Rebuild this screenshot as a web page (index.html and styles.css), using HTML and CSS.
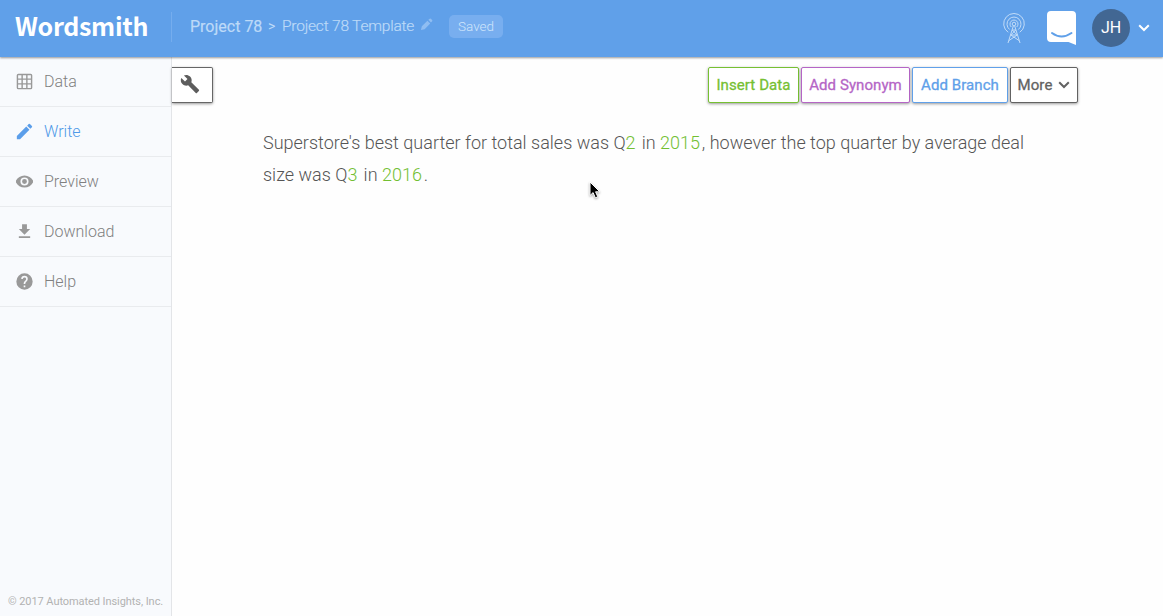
FILE: index.html
```html
<!DOCTYPE html>
<html lang="en">
<head>
<meta charset="utf-8">
<title>Wordsmith</title>
<link rel="stylesheet" href="styles.css">
</head>
<body>
<header class="topbar">
  <div class="logo">Wordsmith</div>
  <nav class="crumbs">
    <span class="crumb-project">Project 78</span>
    <span class="crumb-sep">&gt;</span>
    <span class="crumb-template">Project 78 Template</span>
    <svg class="crumb-edit" viewBox="0 0 14 14"><path d="M1 13l1-4 6-6 3 3-6 6zM9 2l1.400-1.300q.6-.5 1.200 0l1.500 1.500q.5.600 0 1.200L11.800 4.800z"/></svg>
    <span class="saved">Saved</span>
  </nav>
  <div class="actions">
    <svg class="antenna" viewBox="0 0 24 32">
      <circle cx="12" cy="12" r="1.800"/>
      <path d="M9.300 15A4 4 0 1 1 14.700 15M7.600 17.500A7 7 0 1 1 16.400 17.500M6.200 20.300A10.300 10.300 0 1 1 17.800 20.300M11.300 14L6 31M12.700 14L18 31M10.200 18h3.600L8.800 23h6.400L7 28.500M8.800 23l8.200 5.500M10.200 18l5 5"/>
    </svg>
    <svg class="chat" viewBox="0 0 30 35"><path class="chat-body" d="M4 0h21q4 0 4 4v30l-7.500-3H4q-4 0-4-4V4q0-4 4-4z"/><path class="chat-smile" d="M5 22q9.500 7 19.500 0"/></svg>
    <div class="avatar">JH</div>
    <svg class="chevron user-chevron" viewBox="0 0 12 8"><path d="M1.200 1.300L6 6l4.800-4.700"/></svg>
  </div>
</header>
<div class="workspace">
  <aside class="sidebar">
    <a class="item"><svg class="icon" viewBox="0 0 18 18"><path class="line" d="M2.500 1.500h13q1 0 1 1v13q0 1-1 1h-13q-1 0-1-1v-13q0-1 1-1zM1.500 6.500h15M1.500 11.500h15M6.500 1.500v15M11.500 1.500v15"/></svg>Data</a>
    <a class="item active"><svg class="icon" viewBox="2 2 20 20"><path d="M3 17.250V21h3.750L17.810 9.940l-3.750-3.750L3 17.250zM20.710 7.040a1 1 0 0 0 0-1.410l-2.340-2.340a1 1 0 0 0-1.410 0l-1.830 1.830 3.750 3.750 1.830-1.830z"/></svg>Write</a>
    <a class="item"><svg class="icon" viewBox="1.500 1.500 21 21"><path d="M12 4.500C7 4.500 2.730 7.610 1 12c1.730 4.390 6 7.500 11 7.500s9.270-3.110 11-7.500c-1.730-4.390-6-7.500-11-7.500zM12 17a5 5 0 1 1 0-10 5 5 0 0 1 0 10zm0-8a3 3 0 1 0 0 6 3 3 0 0 0 0-6z"/></svg>Preview</a>
    <a class="item"><svg class="icon" viewBox="1.500 1.500 21 21"><path d="M19 9h-4V3H9v6H5l7 7 7-7zM5 18v2h14v-2z"/></svg>Download</a>
    <a class="item"><svg class="icon" viewBox="1.600 1.600 20.800 20.800"><path d="M12 2a10 10 0 1 0 0 20 10 10 0 0 0 0-20zm1 17h-2v-2h2v2zm2.070-7.750l-.9.920C13.450 12.900 13 13.500 13 15h-2v-.5c0-1.100.45-2.100 1.170-2.830l1.240-1.260A2 2 0 1 0 10 9H8a4 4 0 1 1 8 0c0 .88-.36 1.680-.93 2.250z"/></svg>Help</a>
    <footer class="copyright">© 2017 Automated Insights, Inc.</footer>
  </aside>
  <main class="main">
    <div class="toolbar">
      <button class="tool"><svg class="wrench" viewBox="0 0 24 24"><path d="M22.700 19l-9.100-9.100c.9-2.300.4-5-1.500-6.900-2-2-5-2.400-7.400-1.300L9 6 6 9 1.600 4.700C.4 7.100.9 10.100 2.900 12.100c1.900 1.900 4.600 2.400 6.900 1.500l9.100 9.100c.4.400 1 .4 1.400 0l2.300-2.300c.5-.4.500-1.100.1-1.400z"/></svg></button>
      <div class="buttons">
        <button class="btn insert">Insert Data</button>
        <button class="btn synonym">Add Synonym</button>
        <button class="btn branch">Add Branch</button>
        <button class="btn more">More<svg class="chevron" viewBox="0 0 12 8"><path d="M1.200 1.300L6 6l4.800-4.700"/></svg></button>
      </div>
    </div>
    <div class="document">
      <div class="text-line first">Superstore's best quarter for total sales was Q<span class="token">2</span> in <span class="token">2015</span>, however the top quarter by average deal</div>
      <div class="text-line second">size was Q<span class="token">3</span> in <span class="token">2016</span>.</div>
    </div>
  </main>
</div>
<svg class="cursor" viewBox="0 0 12 19"><path d="M1 1v13.500l3.100-2.900 2.200 5.200 2.500-1-2.200-5h4.200z"/></svg>
</body>
</html>
```
FILE: styles.css
```css
* { box-sizing: border-box; }
body {
  margin: 0;
  height: 616px;
  overflow: hidden;
  display: flex;
  flex-direction: column;
  font-family: Roboto, "Liberation Sans", sans-serif;
  background: #fefefe;
  color: #666;
}
svg { display: block; flex: none; }
.topbar {
  position: relative;
  z-index: 2;
  flex: none;
  height: 57px;
  display: flex;
  align-items: flex-start;
  background: #60a0e9;
  box-shadow: 0 1px 2px rgba(0, 0, 0, .4);
}
.logo {
  width: 172px;
  height: 30px;
  margin-top: 12px;
  padding-left: 15px;
  border-right: 1px solid #75adee;
  font: 700 25px/26px "Noto Sans CJK SC", sans-serif;
  letter-spacing: -.3px;
  color: #fff;
}
.crumbs {
  display: flex;
  align-items: center;
  height: 24px;
  margin: 14px 0 0 18px;
  font-size: 16px;
  color: #bddaf8;
  white-space: nowrap;
}
.crumb-project { width: 78px; font-weight: 400; -webkit-text-stroke: .2px currentColor; }
.crumb-sep { width: 14px; font-size: 14px; font-weight: 400; }
.crumb-template { width: 132px; font-size: 15.500px; font-weight: 300; letter-spacing: -.2px; -webkit-text-stroke: .2px currentColor; }
.crumb-project, .crumb-template { flex: none; }
.crumb-edit { width: 13px; height: 13px; margin: -4px 16px 0 6px; fill: #8fbdf2; }
.saved {
  width: 54px;
  height: 23px;
  margin-top: 1px;
  border-radius: 5px;
  background: #78aeef;
  font-size: 13.500px;
  font-weight: 300;
  line-height: 23px;
  text-align: center;
  color: #d0e5fb;
}
.actions { display: flex; align-items: center; margin: 9px 13px 0 auto; }
.antenna { width: 24px; height: 32px; margin-right: 21px; fill: none; stroke: #c2dcf8; stroke-width: 1; }
.chat { width: 30px; height: 35px; margin-right: 15px; }
.chat-body { fill: #fff; }
.chat-smile { fill: none; stroke: #60a0e9; stroke-width: 2; stroke-linecap: round; }
.avatar {
  width: 38px;
  height: 38px;
  margin-right: 8px;
  border-radius: 50%;
  background: #426793;
  color: #fff;
  font-size: 16px;
  line-height: 38px;
  text-align: center;
}
.chevron { width: 12px; height: 8px; fill: none; stroke: currentColor; stroke-width: 2; }
.user-chevron { color: #fff; }
.workspace { flex: 1; display: flex; min-height: 0; }
.sidebar {
  flex: none;
  width: 172px;
  display: flex;
  flex-direction: column;
  border-right: 1px solid #e3e5e8;
  background: #f8fafd;
}
.item {
  display: flex;
  align-items: center;
  gap: 11px;
  height: 50px;
  padding-left: 16px;
  border-bottom: 1px solid #e9ebee;
  font-size: 16px;
  font-weight: 300;
  color: #808080;
}
.icon { width: 17px; height: 17px; fill: #999; }
.line { fill: none; stroke: #999; stroke-width: 1.500; }
.active { color: #4f99e8; }
.active .icon { fill: #5b9eea; }
.copyright { margin: auto 0 7px 8px; font-size: 11px; line-height: 14px; letter-spacing: -.07px; color: #b2b2b2; white-space: nowrap; }
.main { flex: 1; min-width: 0; }
.toolbar { display: flex; justify-content: space-between; height: 47px; padding: 10px 85px 0 0; }
.tool, .btn {
  height: 36px;
  padding: 0;
  background: #fff;
  border: 1px solid currentColor;
  border-radius: 2px;
  box-shadow: 0 1px 3px rgba(0, 0, 0, .4);
  font: 400 15px/34px Roboto, sans-serif;
  white-space: nowrap;
}
.tool { width: 41px; padding: 0 0 2px 8px; border-left: 0; border-radius: 0 2px 2px 0; color: #666; }
.wrench { width: 20px; height: 20px; fill: #5d5d5d; }
.buttons { display: flex; gap: 2px; }
.btn { letter-spacing: .08px; -webkit-text-stroke: .3px currentColor; }
.insert { width: 91px; color: #76c032; }
.synonym { width: 109px; color: #b565c6; }
.branch { width: 96px; color: #60a0e9; }
.more { width: 68px; display: flex; align-items: center; justify-content: center; gap: 6px; color: #626262; }
.document { padding: 23px 0 0 91px; font-size: 18px; font-weight: 300; line-height: 32px; color: #555; white-space: nowrap; }
.token { margin-right: 1.800px; color: #72bf32; }
.cursor { position: absolute; left: 589px; top: 181px; width: 12px; height: 19px; fill: #000; stroke: #fff; stroke-width: 1; filter: drop-shadow(0 1px 1px rgba(0, 0, 0, .35)); }
```
